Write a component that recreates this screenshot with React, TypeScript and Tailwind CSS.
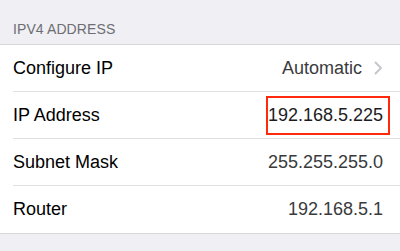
import React from 'react';

interface Row {
  label: string;
  value: string;
  chevron?: boolean;
  highlight?: boolean;
}

const rows: Row[] = [
  { label: 'Configure IP', value: 'Automatic', chevron: true },
  { label: 'IP Address', value: '192.168.5.225', highlight: true },
  { label: 'Subnet Mask', value: '255.255.255.0' },
  { label: 'Router', value: '192.168.5.1' },
];

const Chevron = () => (
  <svg width="9" height="14" viewBox="0 0 9 14" className="ml-[12px] shrink-0">
    <path d="M1.5 1.5 L7 7 L1.5 12.5" fill="none" stroke="#c7c7cc" strokeWidth="2" strokeLinecap="round" strokeLinejoin="round" />
  </svg>
);

const App: React.FC = () => {
  return (
    <div className="w-[400px] h-[251px] bg-[#efeff4] overflow-hidden" style={{ fontFamily: '"Liberation Sans", Arial, sans-serif' }}>
      <div className="h-[44px] flex items-end px-[13px] pb-[8px]">
        <span className="text-[14px] leading-none text-[#6d6d72] tracking-[0.1px]">IPV4 ADDRESS</span>
      </div>
      <div className="bg-white border-t border-b border-[#d8d8dc]">
        {rows.map((row, i) => (
          <div key={row.label} className="pl-[13px]">
            <div className={`h-[47px] flex items-center pr-[17px] ${i < rows.length - 1 ? 'border-b border-[#e0e0e4]' : ''}`}>
              <span className="text-[18px] text-black flex-1">{row.label}</span>
              {row.highlight ? (
                <span className="relative text-[18px] text-[#1c1c1e]">
                  {row.value}
                  <span className="absolute left-[-2px] right-[-7px] top-[-6px] bottom-[-6px] border-2 border-[#ff2a0c]"></span>
                </span>
              ) : (
                <span className="text-[18px] text-[#3a3a3c]">{row.value}</span>
              )}
              {row.chevron && <Chevron />}
            </div>
          </div>
        ))}
      </div>
    </div>
  );
};

export default App;
